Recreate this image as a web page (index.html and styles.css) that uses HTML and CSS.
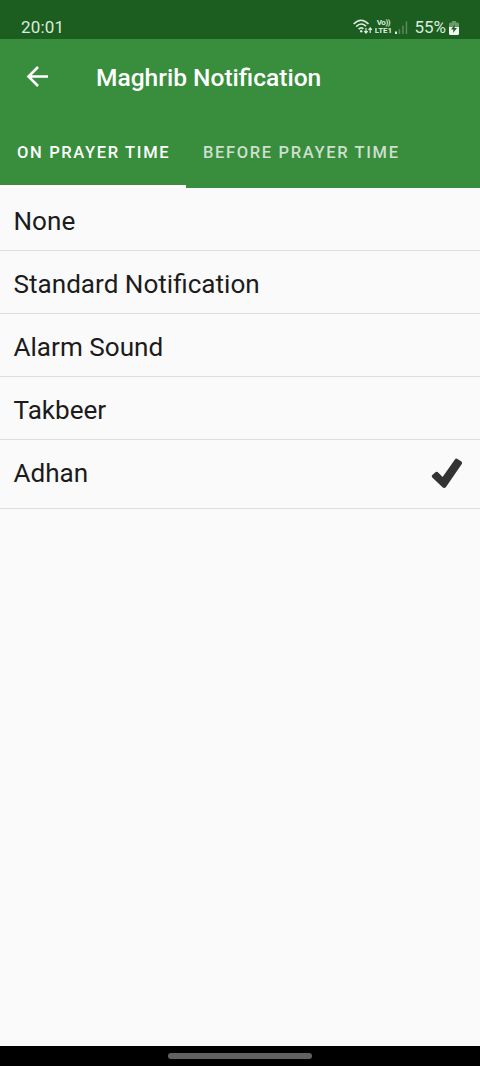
FILE: index.html
```html
<!DOCTYPE html>
<html lang="en">
<head>
<meta charset="utf-8">
<title>Maghrib Notification</title>
<link rel="stylesheet" href="styles.css">
</head>
<body>
<div class="screen">
  <div class="status">
    <span class="clock">20:01</span>
    <div class="indicators">
      <svg class="wifi" width="20" height="16" viewBox="0 0 20 16">
        <g fill="none" stroke="#dcebdc" stroke-width="1.6">
          <path d="M.7 5Q8-2.600 15.500 5"/>
          <path d="M3.200 7.600Q8 2.600 13 7.200"/>
          <path d="M5.600 10.200Q8 7.600 10.400 9.800"/>
          <path d="M13 9v5M11.300 12.200l1.700 1.900 1.700-1.900M17.200 14V9M15.500 10.900l1.700-1.900 1.700 1.900" stroke-width="1.200"/>
        </g>
        <circle cx="8.200" cy="12.200" r="1.200" fill="#dcebdc"/>
      </svg>
      <div class="volte"><span class="vo">Vo))</span><span class="lte">LTE1</span></div>
      <svg class="signal" width="13" height="13" viewBox="0 0 13 13">
        <rect x="0" y="10.500" width="2" height="2.500" fill="#e0ede0"/>
        <path d="M3.700 8.200h1.500V13H3.700zM7.200 4.800h1.500V13H7.200zM10.700 .5h1.500V13h-1.500z" fill="#5b8b5d"/>
      </svg>
      <span class="percent">55%</span>
      <svg class="battery" width="10" height="14" viewBox="0 0 10 14">
        <path d="M3 0h4v1.500h1.500Q10 1.500 10 3v4H0V3Q0 1.500 1.500 1.500H3z" fill="#6b9a6d"/>
        <path d="M0 6h10v6.500Q10 14 8.500 14h-7Q0 14 0 12.500z" fill="#f2f8f2"/>
        <path d="M5.800 3.500 2 8.500h2.500L4 12l4-5H5.500z" fill="#1b5e20"/>
      </svg>
    </div>
  </div>
  <header class="appbar">
    <div class="toolbar">
      <svg class="back" width="22" height="22" viewBox="0 0 22 22"><path d="M22 10.500H2.500M12 1 2.500 10.500l9.500 9.500" fill="none" stroke="#fff" stroke-width="2.600"/></svg>
      <h1 class="title">Maghrib Notification</h1>
    </div>
    <nav class="tabs">
      <div class="tab tab-active"><span class="tab-label">ON PRAYER TIME</span></div>
      <div class="tab"><span class="tab-label">BEFORE PRAYER TIME</span></div>
    </nav>
  </header>
  <main class="list">
    <div class="row"><span class="label">None</span></div>
    <div class="row"><span class="label">Standard Notification</span></div>
    <div class="row"><span class="label">Alarm Sound</span></div>
    <div class="row"><span class="label">Takbeer</span></div>
    <div class="row row-selected"><span class="label">Adhan</span>
      <svg class="check" width="32" height="32" viewBox="0 0 32 32"><path d="M1.300 17 4.700 14.100Q6 13.200 7.200 14.400L11.600 18.900 23.900 1.500Q25 0 26.500 .9L30.400 3.500Q31.700 4.500 30.800 6L15 29Q13.300 30.900 11.500 29.200L1.300 19.600Q0 18.300 1.300 17z" fill="#333"/></svg>
    </div>
  </main>
  <div class="navbar"><div class="handle"></div></div>
</div>
</body>
</html>
```
FILE: styles.css
```css
* { box-sizing: border-box; }
body { margin: 0; font-family: Roboto, sans-serif; }
.screen { width: 480px; height: 1066px; display: flex; flex-direction: column; background: #fafafa; overflow: hidden; }
.status { height: 39px; background: #1b5e20; color: #dcebdc; display: flex; justify-content: space-between; align-items: flex-start; padding: 16px 21px 0; }
.clock { font-size: 17px; line-height: 22px; letter-spacing: 0.150px; }
.indicators { display: flex; align-items: flex-start; }
.wifi { margin-top: 3px; }
.volte { display: flex; flex-direction: column; align-items: center; width: 18px; margin: 3px 3px 0 1px; font-weight: 700; font-size: 8px; line-height: 8px; white-space: nowrap; }
.vo { letter-spacing: -0.400px; }
.signal { margin-top: 5px; }
.percent { font-size: 17px; line-height: 22px; margin: 0 3px 0 6px; }
.battery { margin-top: 5px; }
.appbar { height: 149px; background: #388e3c; color: #fff; display: flex; flex-direction: column; }
.toolbar { height: 75px; display: flex; align-items: center; padding-left: 26px; }
.title { margin: 2px 0 0 48px; font-size: 24.550px; font-weight: 500; line-height: 28px; white-space: nowrap; }
.tabs { height: 74px; display: flex; }
.tab { display: flex; align-items: flex-start; padding: 29px 16px 0 17px; color: #cfdfd0; font-size: 16.500px; font-weight: 500; letter-spacing: 1.650px; white-space: nowrap; }
.tab-active { width: 186px; color: #fff; border-bottom: 3px solid #fff; }
.tab-label { line-height: 20px; }
.list { flex: 1; }
.row { height: 63px; border-bottom: 1px solid #dedede; display: flex; align-items: center; justify-content: space-between; padding: 3px 17px 0 13.500px; }
.row-selected { height: 69px; padding: 2px 17px 2px 13.500px; }
.row-selected .label { margin-bottom: 2px; }
.label { color: #1c1c1c; font-size: 26.100px; line-height: 32px; white-space: nowrap; }
.navbar { height: 20px; background: #000; display: flex; justify-content: center; padding-top: 7px; }
.handle { width: 144px; height: 6px; border-radius: 3px; background: #626262; }
```
